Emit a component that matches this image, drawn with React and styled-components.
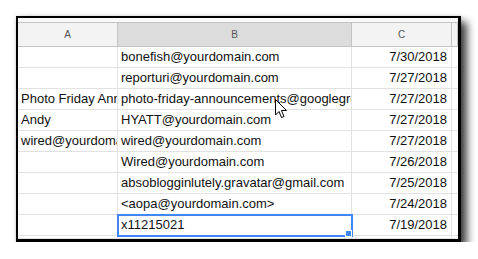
import React from "react";
import styled, { createGlobalStyle } from "styled-components";

const Global = createGlobalStyle`
  html, body { margin: 0; padding: 0; background: #fff; }
  body { font-family: "Liberation Sans", Arial, sans-serif; }
`;

const Page = styled.div`
  padding: 16px 0 0 16px;
`;

const Frame = styled.div`
  position: relative;
  box-sizing: border-box;
  width: 445px;
  height: 226px;
  border-style: solid;
  border-color: #000;
  border-width: 2px 3px 3px 2px;
  background: #fff;
  overflow: hidden;
  box-shadow: 6px 6px 8px rgba(0, 0, 0, 0.75), 0 0 4px rgba(0, 0, 0, 0.15);
`;

const Outer = styled.div`
  position: relative;
`;

const Sheet = styled.div`
  display: grid;
  grid-template-columns: 100px 234px 100px 6px;
`;

const TopStrip = styled.div`
  grid-column: 1 / -1;
  height: 4px;
  background: #f8f8f8;
  border-bottom: 1px solid #c4c4c4;
`;

const HeadCell = styled.div`
  box-sizing: border-box;
  height: 24px;
  background: ${(p) => (p.$active ? "#dcdcdc" : "#f3f3f3")};
  border-right: 1px solid #c4c4c4;
  border-bottom: 1px solid #c4c4c4;
  color: #555;
  font-size: 10px;
  display: flex;
  align-items: center;
  justify-content: center;
`;

const Cell = styled.div`
  position: relative;
  box-sizing: border-box;
  height: 21px;
  border-right: 1px solid #e2e2e2;
  border-bottom: 1px solid #e2e2e2;
  padding: 0 3px 0 3px;
  font-size: 13px;
  color: #111;
  line-height: 20px;
  white-space: nowrap;
  overflow: hidden;
  text-align: ${(p) => (p.$right ? "right" : "left")};
  padding-right: ${(p) => (p.$right ? "4px" : "3px")};
`;

const Tail = styled(Cell)`
  height: ${(p) => (p.$short ? "3px" : "21px")};
`;

const Selection = styled.div`
  position: absolute;
  z-index: 2;
  left: -1px;
  top: -1px;
  right: -1px;
  bottom: -1px;
  border: 2px solid #4285f4;
  pointer-events: none;
`;

const Handle = styled.div`
  position: absolute;
  right: -1px;
  bottom: -2px;
  width: 7px;
  height: 7px;
  background: #4285f4;
  border: 1px solid #fff;
  box-sizing: border-box;
`;

const SelectedWrap = styled.div`
  position: relative;
  z-index: 2;
`;

const Pointer = styled.svg`
  position: absolute;
  z-index: 3;
  left: 257px;
  top: 81px;
  width: 13px;
  height: 20px;
`;

const rows = [
  ["", "bonefish@yourdomain.com", "7/30/2018"],
  ["", "reporturi@yourdomain.com", "7/27/2018"],
  ["Photo Friday Announcements", "photo-friday-announcements@googlegroups.com", "7/27/2018"],
  ["Andy", "HYATT@yourdomain.com", "7/27/2018"],
  ["wired@yourdomain.com", "wired@yourdomain.com", "7/27/2018"],
  ["", "Wired@yourdomain.com", "7/26/2018"],
  ["", "absoblogginlutely.gravatar@gmail.com", "7/25/2018"],
  ["", "<aopa@yourdomain.com>", "7/24/2018"],
  ["", "x11215021", "7/19/2018"],
];

export default function App() {
  return (
    <>
      <Global />
      <Page>
        <Frame>
          <Outer>
            <Sheet>
              <TopStrip />
              <HeadCell>A</HeadCell>
              <HeadCell $active>B</HeadCell>
              <HeadCell>C</HeadCell>
              <HeadCell />
              {rows.map(([a, b, c], i) => {
                const last = i === rows.length - 1;
                return (
                  <React.Fragment key={i}>
                    <Cell>{a}</Cell>
                    {last ? (
                      <SelectedWrap>
                        <Cell>{b}</Cell>
                        <Selection>
                          <Handle />
                        </Selection>
                      </SelectedWrap>
                    ) : (
                      <Cell>{b}</Cell>
                    )}
                    <Cell $right>{c}</Cell>
                    <Cell />
                  </React.Fragment>
                );
              })}
              <Tail $short />
              <Tail $short />
              <Tail $short />
              <Tail $short />
            </Sheet>
            <Pointer viewBox="0 0 13 20">
              <path
                d="M0.5 0.5 L0.5 16 L4 12.5 L6.5 18.5 L9 17.5 L6.5 11.5 L11.5 11.5 Z"
                fill="#fff"
                stroke="#000"
                strokeWidth="1"
                strokeLinejoin="miter"
              />
            </Pointer>
          </Outer>
        </Frame>
      </Page>
    </>
  );
}
